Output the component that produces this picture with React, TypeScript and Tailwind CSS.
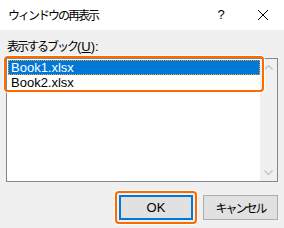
import React from "react";

const jp = { fontFamily: '"Noto Sans CJK JP", "Noto Sans", sans-serif' };
const latin = { fontFamily: '"Liberation Sans", "Noto Sans CJK JP", sans-serif' };

const books = ["Book1.xlsx", "Book2.xlsx"];

export default function App() {
	return (
		<div className="w-[284px] h-[228px] bg-[#f0f0f0] flex flex-col overflow-hidden" style={jp}>
			<div className="h-[30px] bg-white flex items-center pl-2 text-[12px] text-black">
				<span className="tracking-[-2px]">ウィンドウの再表示</span>
				<span className="ml-auto w-[14px] text-center text-[13px]" style={latin}>?</span>
				<svg className="ml-[29px] mr-[15px]" width="12" height="12" viewBox="0 0 12 12">
					<path d="M1 1 L11 11 M11 1 L1 11" stroke="#000" strokeWidth="1" />
				</svg>
			</div>

			<div className="px-[6px] pt-[7px]">
				<div className="text-[12px] leading-[18px] pl-[1px] text-black">
					<span className="tracking-[-2px]">表示するブック</span>
					<span style={latin} className="text-[13px]">(<span className="underline">U</span>):</span>
				</div>

				<div className="relative mt-[2px] h-[124px] border border-[#828790] bg-white flex">
					<div className="flex-1 pt-[1px] pl-[1px]">
						{books.map((b, i) => (
							<div
								key={b}
								className={`h-[15px] pl-[3px] text-[13px] leading-[15px] ${
									i === 0 ? "bg-[#0078d7] text-white outline outline-1 outline-dotted outline-[#f29c3c] -outline-offset-1" : "text-black"
								}`}
								style={latin}
							>
								{b}
							</div>
						))}
					</div>
					<div className="w-[17px] bg-[#f0f0f0] flex flex-col items-center justify-between py-[6px]">
						<svg width="9" height="5" viewBox="0 0 9 5">
							<path d="M0.5 4.5 L4.5 0.5 L8.5 4.5" stroke="#c0c0c0" strokeWidth="1.2" fill="none" />
						</svg>
						<svg width="9" height="5" viewBox="0 0 9 5">
							<path d="M0.5 0.5 L4.5 4.5 L8.5 0.5" stroke="#c0c0c0" strokeWidth="1.2" fill="none" />
						</svg>
					</div>
					<div className="absolute left-[-3px] top-[-3px] w-[260px] h-[36px] rounded-[4px] border-2 border-[#ff6a00] shadow-[0_0_0_1px_#fff]" />
				</div>

				<div className="flex justify-end gap-[10px] mt-[13px] text-[12px]">
					<div className="relative">
						<div className="w-[74px] h-[25px] bg-[#e1e1e1] border-2 border-[#0078d7] flex items-center justify-center text-black" style={latin}>
							<span className="text-[13px]">OK</span>
						</div>
						<div className="absolute left-[-4px] top-[-4px] w-[82px] h-[33px] rounded-[4px] border-2 border-[#ff6a00] shadow-[0_0_0_1px_#fff]" />
					</div>
					<div className="w-[75px] h-[25px] bg-[#e1e1e1] border border-[#adadad] flex items-center justify-center text-black">
						<span className="tracking-[-2px]">キャンセル</span>
					</div>
				</div>
			</div>
		</div>
	);
}
